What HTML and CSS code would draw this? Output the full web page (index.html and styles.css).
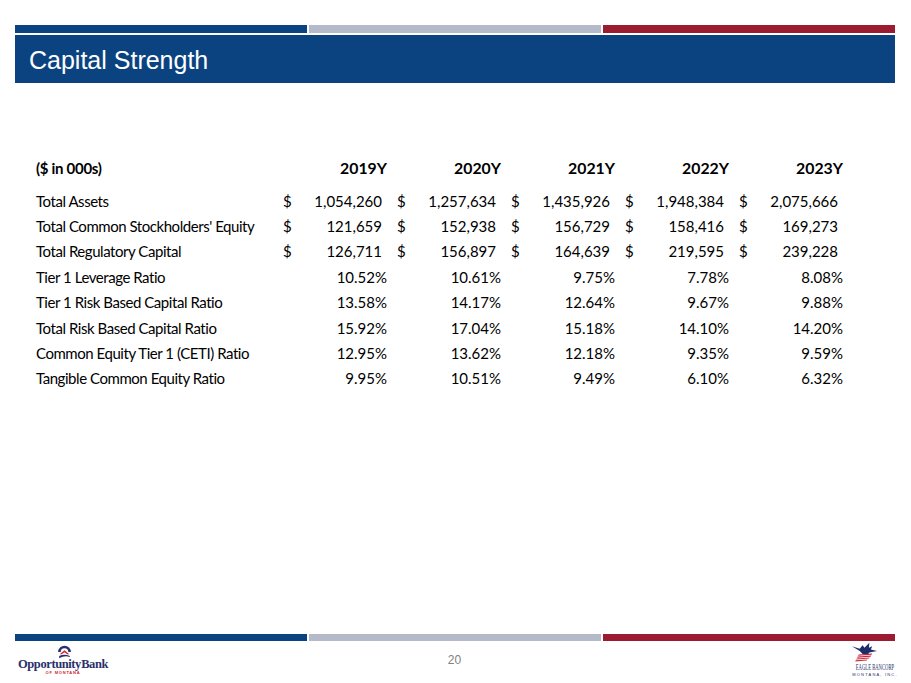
FILE: index.html
```html
<!DOCTYPE html>
<html>
<head>
<meta charset="utf-8">
<link rel="stylesheet" href="styles.css">
</head>
<body>
<div class="page">
  <header class="top">
    <div class="bars"><span class="bar blue"></span><span class="bar gray"></span><span class="bar red"></span></div>
    <div class="band"><h1>Capital Strength</h1></div>
  </header>
  <main class="content">
    <div class="table">
      <div class="row head">
        <div class="label">($ in 000s)</div>
        <div class="cell pct">2019Y</div><div class="cell pct">2020Y</div><div class="cell pct">2021Y</div><div class="cell pct">2022Y</div><div class="cell pct">2023Y</div>
      </div>
      <div class="row">
        <div class="label">Total Assets</div>
        <div class="cell money"><span class="cur">$</span><span class="num">1,054,260</span></div>
        <div class="cell money"><span class="cur">$</span><span class="num">1,257,634</span></div>
        <div class="cell money"><span class="cur">$</span><span class="num">1,435,926</span></div>
        <div class="cell money"><span class="cur">$</span><span class="num">1,948,384</span></div>
        <div class="cell money"><span class="cur">$</span><span class="num">2,075,666</span></div>
      </div>
      <div class="row">
        <div class="label">Total Common Stockholders' Equity</div>
        <div class="cell money"><span class="cur">$</span><span class="num">121,659</span></div>
        <div class="cell money"><span class="cur">$</span><span class="num">152,938</span></div>
        <div class="cell money"><span class="cur">$</span><span class="num">156,729</span></div>
        <div class="cell money"><span class="cur">$</span><span class="num">158,416</span></div>
        <div class="cell money"><span class="cur">$</span><span class="num">169,273</span></div>
      </div>
      <div class="row">
        <div class="label">Total Regulatory Capital</div>
        <div class="cell money"><span class="cur">$</span><span class="num">126,711</span></div>
        <div class="cell money"><span class="cur">$</span><span class="num">156,897</span></div>
        <div class="cell money"><span class="cur">$</span><span class="num">164,639</span></div>
        <div class="cell money"><span class="cur">$</span><span class="num">219,595</span></div>
        <div class="cell money"><span class="cur">$</span><span class="num">239,228</span></div>
      </div>
      <div class="row">
        <div class="label">Tier 1 Leverage Ratio</div>
        <div class="cell pct">10.52%</div><div class="cell pct">10.61%</div><div class="cell pct">9.75%</div><div class="cell pct">7.78%</div><div class="cell pct">8.08%</div>
      </div>
      <div class="row">
        <div class="label">Tier 1 Risk Based Capital Ratio</div>
        <div class="cell pct">13.58%</div><div class="cell pct">14.17%</div><div class="cell pct">12.64%</div><div class="cell pct">9.67%</div><div class="cell pct">9.88%</div>
      </div>
      <div class="row">
        <div class="label">Total Risk Based Capital Ratio</div>
        <div class="cell pct">15.92%</div><div class="cell pct">17.04%</div><div class="cell pct">15.18%</div><div class="cell pct">14.10%</div><div class="cell pct">14.20%</div>
      </div>
      <div class="row">
        <div class="label">Common Equity Tier 1 (CETI) Ratio</div>
        <div class="cell pct">12.95%</div><div class="cell pct">13.62%</div><div class="cell pct">12.18%</div><div class="cell pct">9.35%</div><div class="cell pct">9.59%</div>
      </div>
      <div class="row">
        <div class="label">Tangible Common Equity Ratio</div>
        <div class="cell pct">9.95%</div><div class="cell pct">10.51%</div><div class="cell pct">9.49%</div><div class="cell pct">6.10%</div><div class="cell pct">6.32%</div>
      </div>
    </div>
  </main>
  <footer class="foot">
    <div class="bars short"><span class="bar blue"></span><span class="bar gray"></span><span class="bar red"></span></div>
    <div class="foot-row">
      <div class="logo-ob">
        <svg class="ob-icon" viewBox="0 0 16 16" width="17" height="17">
          <path d="M2 9.5 A6 6 0 0 1 14 9.5 L11.6 9.5 A3.6 3.6 0 0 0 4.4 9.5 Z" fill="#2b2f6b"/>
          <path d="M3.5 11.5 L8 7.8 L12.5 11.5 L10.6 11.5 L8 9.6 L5.4 11.5 Z" fill="#d3222e"/>
          <path d="M3 13.2 Q8 10.6 13 13.2 L13 14 Q8 12.4 3 15.2 Z" fill="#2b2f6b"/>
        </svg>
        <span class="ob-name">Opportunity Bank</span>
        <span class="ob-sub">OF MONTANA</span>
      </div>
      <div class="page-num">20</div>
      <div class="logo-eagle">
        <svg class="eagle" viewBox="0 0 30 22" width="29" height="22">
          <path d="M1 4 L9 6.5 L12 3 L14 5.5 L19 0.5 L18.5 5.5 L22 4 L20.5 7.5 L27 9 L19 10.5 L17 13 L12 12 L9 9 Z" fill="#1d2d6b"/>
          <path d="M8 12.6 L22 11.6 L21.2 12.8 L7.2 13.8 Z" fill="#c9283b"/>
          <path d="M7 14.6 L21 13.6 L20.2 14.8 L6.2 15.8 Z" fill="#c9283b"/>
          <path d="M6 16.6 L19.5 15.6 L18.7 16.8 L5.2 17.8 Z" fill="#c9283b"/>
          <path d="M5 18.6 L17 17.6 L16.2 18.8 L4.2 19.8 Z" fill="#c9283b"/>
        </svg>
        <span class="eagle-name">EAGLE BANCORP</span>
        <span class="eagle-sub">MONTANA, INC.</span>
      </div>
    </div>
  </footer>
</div>
</body>
</html>
```

FILE: styles.css
```css
* { box-sizing: border-box; }
html, body { margin: 0; padding: 0; background: #fff; }
.page {
  width: 911px;
  height: 683px;
  display: flex;
  flex-direction: column;
  overflow: hidden;
}
.top { padding: 25px 16px 0 15px; }
.bars { display: flex; gap: 2px; height: 8px; }
.bars.short { height: 7px; }
.bar { flex: 1; }
.bar.blue { background: #0b4380; }
.bar.gray { background: #b4bac9; }
.bar.red { background: #9b1b30; }
.band {
  margin-top: 2px;
  height: 48px;
  background: #0b4380;
  display: flex;
  align-items: center;
  padding-left: 14px;
}
.band h1 {
  margin: 0;
  font: 400 25px "Liberation Sans", Arial, sans-serif;
  color: #fff;
  padding-top: 3px;
}
.content { padding: 72px 0 0 36px; }
.table {
  font-family: Lato, "Open Sans", sans-serif;
  font-size: 15px;
  color: #000;
}
.row {
  display: grid;
  grid-template-columns: 237px repeat(5, 114px);
  height: 25.4px;
  align-items: center;
}
.row.head { font-weight: 700; margin-bottom: 7.6px; }
.row.head .cell { font-size: 15.8px; }
.label { white-space: nowrap; letter-spacing: -0.45px; }
.row.head .label { letter-spacing: -0.3px; }
.cell.pct { text-align: right; }
.cell.money { display: flex; justify-content: space-between; }
.cur { padding-left: 10px; }
.num { padding-right: 5px; }
.foot { margin-top: auto; padding: 0 16px 0 15px; }
.foot-row {
  height: 42px;
  display: grid;
  grid-template-columns: 1fr auto 1fr;
  align-items: start;
}
.logo-ob {
  justify-self: start;
  display: flex;
  flex-direction: column;
  align-items: center;
  margin-left: 3px;
  padding-top: 1px;
  width: 90px;
}
.ob-icon { display: block; margin-left: 2px; }
.ob-name {
  font: 700 12.5px "Liberation Serif", "Times New Roman", serif;
  color: #2b2f6b;
  line-height: 11px;
  letter-spacing: -0.4px;
  word-spacing: -2.5px;
  white-space: nowrap;
}
.ob-sub {
  font: 700 4px "Liberation Sans", Arial, sans-serif;
  color: #d3222e;
  letter-spacing: 0.8px;
  line-height: 6px;
}
.page-num {
  font: 400 12px "Liberation Sans", Arial, sans-serif;
  color: #808080;
  padding-top: 12px;
  margin-right: 1px;
}
.logo-eagle {
  justify-self: end;
  display: flex;
  flex-direction: column;
  align-items: center;
  width: 38px;
  margin-right: 1px;
  padding-top: 1px;
}
.eagle { display: block; align-self: flex-start; margin-left: -5px; }
.eagle-name {
  display: inline-block;
  font: 400 7.5px "Liberation Serif", "Times New Roman", serif;
  color: #1d2d6b;
  line-height: 8px;
  white-space: nowrap;
  transform: scaleX(0.62);
}
.eagle-sub {
  font: 400 4px "Liberation Sans", Arial, sans-serif;
  color: #1d2d6b;
  letter-spacing: 1.2px;
  line-height: 6px;
  white-space: nowrap;
}
```
